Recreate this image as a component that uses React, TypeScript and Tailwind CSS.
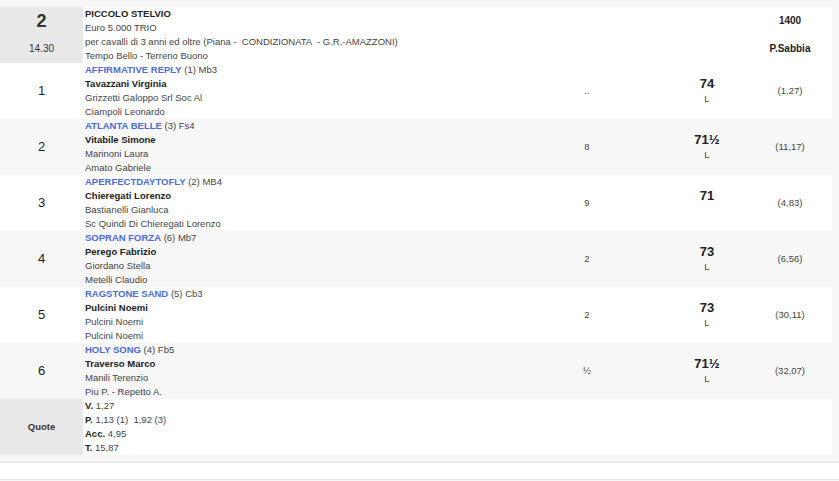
import React from "react";

type Row = {
  n: string;
  horse: string;
  extra: string;
  jockey: string;
  owner: string;
  trainer: string;
  dist: string;
  w: string;
  l: string;
  q: string;
};

const rows: Row[] = [
  { n: "1", horse: "AFFIRMATIVE REPLY", extra: "(1) Mb3", jockey: "Tavazzani Virginia", owner: "Grizzetti Galoppo Srl Soc Al", trainer: "Ciampoli Leonardo", dist: "..", w: "74", l: "L", q: "(1,27)" },
  { n: "2", horse: "ATLANTA BELLE", extra: "(3) Fs4", jockey: "Vitabile Simone", owner: "Marinoni Laura", trainer: "Amato Gabriele", dist: "8", w: "71½", l: "L", q: "(11,17)" },
  { n: "3", horse: "APERFECTDAYTOFLY", extra: "(2) MB4", jockey: "Chieregati Lorenzo", owner: "Bastianelli Gianluca", trainer: "Sc Quindi Di Chieregati Lorenzo", dist: "9", w: "71", l: "", q: "(4,83)" },
  { n: "4", horse: "SOPRAN FORZA", extra: "(6) Mb7", jockey: "Perego Fabrizio", owner: "Giordano Stella", trainer: "Metelli Claudio", dist: "2", w: "73", l: "L", q: "(6,56)" },
  { n: "5", horse: "RAGSTONE SAND", extra: "(5) Cb3", jockey: "Pulcini Noemi", owner: "Pulcini Noemi", trainer: "Pulcini Noemi", dist: "2", w: "73", l: "L", q: "(30,11)" },
  { n: "6", horse: "HOLY SONG", extra: "(4) Fb5", jockey: "Traverso Marco", owner: "Manili Terenzio", trainer: "Piu P. - Repetto A.", dist: "½", w: "71½", l: "L", q: "(32,07)" },
];

export default function App() {
  return (
    <div className="w-[839px] h-[481px] bg-[#f7f7f7] pt-[7px] font-['Liberation_Sans',Arial,sans-serif] text-[9.5px] leading-[14px] text-[#444] overflow-hidden">
      <div className="w-[832px]">
        {/* Header row */}
        <div className="grid grid-cols-[83px_474px_60px_45px_90px_80px] h-[56px] bg-white">
          <div className="bg-[#e8e8e8] flex flex-col text-[#333]">
            <div className="h-[28px] flex items-center justify-center text-[18px] font-bold">2</div>
            <div className="h-[28px] flex items-center justify-center text-[10px]">14.30</div>
          </div>
          <div className="pl-[2px] whitespace-pre">
            <div className="font-bold text-[#222]">PICCOLO STELVIO</div>
            <div>Euro 5.000 TRIO</div>
            <div>per cavalli di 3 anni ed oltre (Piana -  CONDIZIONATA  - G.R.-AMAZZONI)</div>
            <div>Tempo Bello - Terreno Buono</div>
          </div>
          <div />
          <div />
          <div />
          <div className="flex flex-col text-[#222] pr-[4px]">
            <div className="h-[28px] flex items-center justify-center text-[10px] font-bold">1400</div>
            <div className="h-[28px] flex items-center justify-center text-[10px] font-bold">P.Sabbia</div>
          </div>
        </div>

        {rows.map((r, i) => (
          <div
            key={r.n}
            className={
              "grid grid-cols-[83px_474px_60px_45px_90px_80px] h-[56px] " +
              (i % 2 === 1 ? "bg-[#f7f7f7]" : "bg-white")
            }
          >
            <div className="flex items-center justify-center text-[13px] text-[#222]">{r.n}</div>
            <div className="pl-[2px]">
              <div>
                <span className="font-bold text-[#4a6ad6]">{r.horse}</span>
                <span> {r.extra}</span>
              </div>
              <div className="font-bold text-[#222]">{r.jockey}</div>
              <div>{r.owner}</div>
              <div>{r.trainer}</div>
            </div>
            <div className="flex items-center justify-center">{r.dist}</div>
            <div />
            <div className="flex flex-col items-center justify-center">
              <div className="text-[13px] leading-[16px] font-bold text-[#222]">{r.w}</div>
              <div className="h-[14px]">{r.l}</div>
            </div>
            <div className="flex items-center justify-center pr-[4px]">{r.q}</div>
          </div>
        ))}

        {/* Quote row */}
        <div className="grid grid-cols-[83px_474px_60px_45px_90px_80px] h-[56px] bg-white">
          <div className="bg-[#e8e8e8] flex items-center justify-center font-bold text-[#333]">Quote</div>
          <div className="pl-[2px] whitespace-pre">
            <div><span className="font-bold text-[#222]">V.</span> 1,27</div>
            <div><span className="font-bold text-[#222]">P.</span> 1,13 (1)  1,92 (3)</div>
            <div><span className="font-bold text-[#222]">Acc.</span> 4,95</div>
            <div><span className="font-bold text-[#222]">T.</span> 15,87</div>
          </div>
          <div />
          <div />
          <div />
          <div />
        </div>
      </div>

      <div className="mt-[6px] h-[19px] bg-white border-t-2 border-b border-t-[#e8e8e8] border-b-[#e4e4e4]" />
    </div>
  );
}
